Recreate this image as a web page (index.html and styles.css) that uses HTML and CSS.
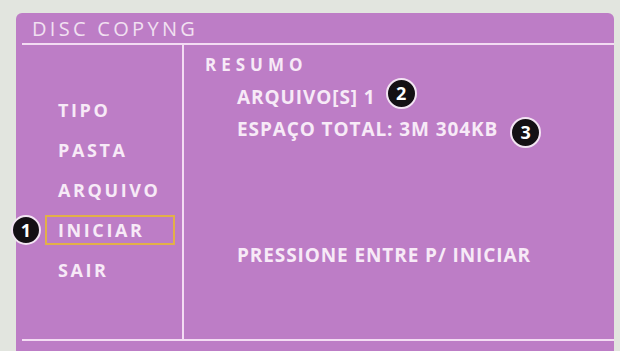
FILE: index.html
```html
<!DOCTYPE html>
<html>
<head>
<meta charset="utf-8">
<link rel="stylesheet" href="styles.css">
</head>
<body>
<div class="panel">
  <div class="header">DISC COPYNG</div>
  <div class="content">
    <ul class="menu">
      <li class="item">TIPO</li>
      <li class="item">PASTA</li>
      <li class="item">ARQUIVO</li>
      <li class="item selected"><span class="badge badge-left">1</span>INICIAR</li>
      <li class="item">SAIR</li>
    </ul>
    <div class="summary">
      <div class="title">RESUMO</div>
      <div class="line first">ARQUIVO[S] 1<span class="badge badge-inline b2">2</span></div>
      <div class="line">ESPAÇO TOTAL: 3M 304KB<span class="badge badge-inline b3">3</span></div>
      <div class="line prompt">PRESSIONE ENTRE P/ INICIAR</div>
    </div>
  </div>
</div>
</body>
</html>
```
FILE: styles.css
```css
* { box-sizing: border-box; }
html, body { margin: 0; padding: 0; }
body {
  width: 620px;
  height: 351px;
  overflow: hidden;
  background: #e2e5df;
  font-family: "Open Sans", "DejaVu Sans", sans-serif;
  color: #f7eaf7;
}
.panel {
  margin: 13px 0 0 16px;
  width: 598px;
  height: 338px;
  background: #bd7dc6;
  border-radius: 6px 6px 0 0;
  padding-left: 6px;
  display: flex;
  flex-direction: column;
}
.header {
  height: 32px;
  border-bottom: 2px solid #f3dcf3;
  padding: 4px 0 0 10px;
  font-size: 20px;
  line-height: 24px;
  font-weight: 500;
  letter-spacing: 3.3px;
  color: #f1e0f1;
}
.content {
  height: 296px;
  display: flex;
  border-bottom: 2px solid #f3dcf3;
}
.menu {
  list-style: none;
  margin: 0;
  padding: 50px 0 0 23px;
  width: 162px;
  border-right: 2px solid #f3dcf3;
  display: flex;
  flex-direction: column;
  gap: 10px;
}
.item {
  position: relative;
  width: 130px;
  height: 30px;
  border: 2px solid transparent;
  padding-left: 11px;
  font-size: 18px;
  font-weight: 700;
  line-height: 26px;
  letter-spacing: 2.6px;
}
.item.selected { border-color: #e2b048; }
.summary {
  padding: 10px 0 0 21px;
  display: flex;
  flex-direction: column;
  font-weight: 700;
}
.title {
  font-size: 17px;
  line-height: 20px;
  letter-spacing: 5px;
}
.line {
  margin-left: 32px;
  font-size: 19px;
  line-height: 32px;
  letter-spacing: 0.9px;
  display: flex;
  align-items: center;
  white-space: nowrap;
}
.line.first { margin-top: 6px; }
.prompt { margin-top: 94px; }
.badge {
  width: 31px;
  height: 31px;
  border-radius: 50%;
  background: #141014;
  border: 2px solid #f3e4f3;
  color: #ffffff;
  font-size: 18px;
  font-weight: 700;
  letter-spacing: 0;
  line-height: 27px;
  text-align: center;
  display: inline-block;
}
.badge-left {
  position: absolute;
  left: -36px;
  top: -2px;
  width: 30px;
  height: 30px;
  line-height: 26px;
}
.badge-inline { margin-left: 5px; }
.b2 { margin-left: 10px; position: relative; top: -4px; }
.b3 { margin-left: 12px; position: relative; top: 3px; }
```
